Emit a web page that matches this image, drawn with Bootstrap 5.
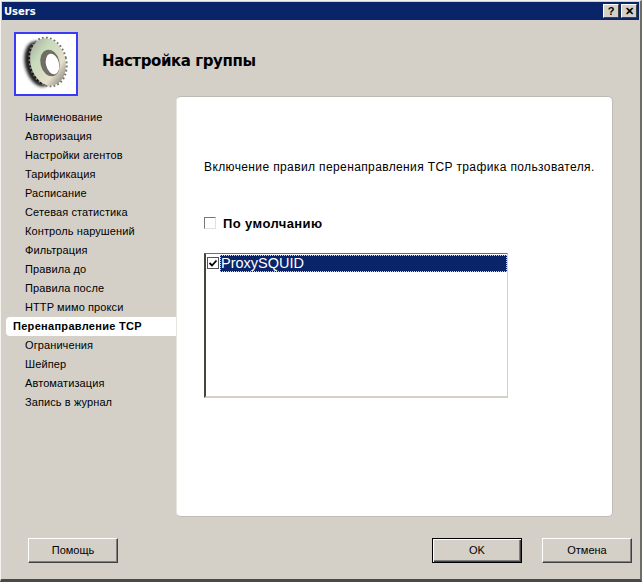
<!DOCTYPE html>
<html lang="ru">
<head>
<meta charset="utf-8">
<title>Users</title>
<link rel="stylesheet" href="https://cdn.jsdelivr.net/npm/bootstrap@5.3.0/dist/css/bootstrap.min.css">
<style>
html,body{margin:0;background:#d4d0c8;}
body{font-family:"Liberation Sans",Arial,sans-serif;font-size:11px;line-height:13px;color:#000;}
.win{width:642px;height:582px;background:#d4d0c8;padding:2px 2px 0 2px;border-left:1px solid #f4f3ef;border-right:2px solid #6e6c67;border-top:1px solid #f4f3ef;border-bottom:3px solid #4a4946;overflow:hidden;}
.tbar{height:18px;background:#0a246a;color:#fff;font-weight:700;padding:0 2px 0 2px;margin:-1px -1px 0 -1px;font-family:"DejaVu Sans",sans-serif;font-size:10px;flex:none;}
.tbtn{width:16px;height:14px;background:#d4d0c8;color:#000;border:1px solid;border-color:#fff #404040 #404040 #fff;font:700 11px/12px "Liberation Sans",sans-serif;text-align:center;padding:0;}
.tbtn+.tbtn{margin-left:2px;}
.hdr{padding:12px 0 0 11px;height:76px;flex:none;}
.logo{width:64px;height:64px;border:2px solid #3b3bf7;background:#fff;flex:none;}
.ttl{font:700 15px/20px "DejaVu Sans",sans-serif;letter-spacing:-.4px;margin:19px 0 0 24px;}
.body-row{height:421px;flex:none;}
.side{width:173px;flex:none;padding-top:12px;}
.side-item{height:19px;line-height:18px;padding-left:22px;letter-spacing:.1px;}
.side-item.on{background:#fff;font-weight:700;padding-left:7px;margin-left:3px;border-radius:4px 0 0 4px;letter-spacing:.3px;}
.pane{width:437px;height:421px;background:#fff;border:1px solid #bdbbb5;border-left-color:#e6e4df;border-radius:5px;padding:63px 0 0 27px;flex:none;}
.desc{font-size:12px;line-height:15px;letter-spacing:.38px;margin:0;white-space:nowrap;}
.chk-row{margin-top:41px;height:14px;}
.box{width:12px;height:12px;border:1px solid;border-color:#7a7873 #e3e1dc #e3e1dc #7a7873;background:#fff;flex:none;}
.chk-lbl{font-weight:700;font-size:13px;margin-left:7px;letter-spacing:.4px;}
.lst{width:304px;height:145px;margin-top:23px;background:#fff;border:2px solid;border-color:#6f6e6a #d4d0c8 #d4d0c8 #45443f;border-top-width:1px;border-right-width:1px;}
.lst-row{height:17px;margin-top:1px;}
.lst-box{width:12px;height:12px;border:1px solid #555;background:#fff;margin:2px 1px 0 1px;flex:none;display:flex;}
.lst-txt{flex:1;background:#0a246a;color:#fff;font-size:14.5px;line-height:16px;outline:1px dotted #e8d77a;outline-offset:-1px;padding-left:1px;}
.foot{padding:21px 6px 0 25px;flex:none;}
.wbtn{width:90px;height:25px;background:#d4d0c8;border:1px solid;border-color:#fff #404040 #404040 #fff;box-shadow:inset -1px -1px 0 #808080;font-size:11px;color:#000;padding:0;}
.wbtn.def{border:1px solid #000;box-shadow:inset 1px 1px 0 #fff,inset -1px -1px 0 #404040,inset -2px -2px 0 #808080;}
.gap20{margin-left:20px;}
</style>
</head>
<body>
<div class="win d-flex flex-column">
  <div class="tbar d-flex align-items-center justify-content-between">
    <span>Users</span>
    <span class="d-flex"><button class="tbtn">?</button><button class="tbtn">✕</button></span>
  </div>
  <div class="hdr d-flex align-items-start">
    <div class="logo">
      <svg width="60" height="60" viewBox="0 0 60 60" class="d-block">
        <defs>
          <linearGradient id="face" x1="0.2" y1="0" x2="0.8" y2="1">
            <stop offset="0" stop-color="#a9aca4"/><stop offset=".28" stop-color="#c5dab8"/>
            <stop offset=".72" stop-color="#e6dfcc"/><stop offset="1" stop-color="#85837b"/>
          </linearGradient>
          <filter id="soft" x="-30%" y="-30%" width="160%" height="160%"><feGaussianBlur stdDeviation=".5"/></filter>
          <filter id="blur2" x="-30%" y="-30%" width="160%" height="160%"><feGaussianBlur stdDeviation="1.5"/></filter>
        </defs>
        <ellipse cx="23" cy="30" rx="14" ry="23" transform="rotate(-14 23 30)" fill="#1f1f1f" filter="url(#blur2)"/>
        <g filter="url(#soft)">
          <ellipse cx="32" cy="28" rx="18" ry="24.5" transform="rotate(-14 32 28)" fill="none" stroke="#77756e" stroke-width="2.4" stroke-dasharray="1.8 2.2"/>
          <ellipse cx="32" cy="28" rx="17.5" ry="24" transform="rotate(-14 32 28)" fill="url(#face)"/>
          <ellipse cx="34" cy="29" rx="9.5" ry="13.5" transform="rotate(-14 34 29)" fill="#6f6d66"/>
          <ellipse cx="36.5" cy="30" rx="6.5" ry="10.5" transform="rotate(-14 36.5 30)" fill="#fff"/>
        </g>
      </svg>
    </div>
    <h1 class="ttl">Настройка группы</h1>
  </div>
  <div class="body-row d-flex">
    <nav class="side">
      <div class="side-item">Наименование</div>
      <div class="side-item">Авторизация</div>
      <div class="side-item">Настройки агентов</div>
      <div class="side-item">Тарификация</div>
      <div class="side-item">Расписание</div>
      <div class="side-item">Сетевая статистика</div>
      <div class="side-item">Контроль нарушений</div>
      <div class="side-item">Фильтрация</div>
      <div class="side-item">Правила до</div>
      <div class="side-item">Правила после</div>
      <div class="side-item">HTTP мимо прокси</div>
      <div class="side-item on">Перенаправление TCP</div>
      <div class="side-item">Ограничения</div>
      <div class="side-item">Шейпер</div>
      <div class="side-item">Автоматизация</div>
      <div class="side-item">Запись в журнал</div>
    </nav>
    <main class="pane">
      <p class="desc">Включение правил перенаправления TCP трафика пользователя.</p>
      <div class="chk-row d-flex align-items-center">
        <span class="box"></span><span class="chk-lbl">По умолчанию</span>
      </div>
      <div class="lst">
        <div class="lst-row d-flex">
          <span class="lst-box"><svg width="10" height="10" viewBox="0 0 10 10"><path d="M1.5 5l2.5 2.5 4.5-5" fill="none" stroke="#000" stroke-width="1.8"/></svg></span>
          <span class="lst-txt">ProxySQUID</span>
        </div>
      </div>
    </main>
  </div>
  <div class="foot d-flex">
    <button class="wbtn">Помощь</button>
    <button class="wbtn def ms-auto">OK</button>
    <button class="wbtn gap20">Отмена</button>
  </div>
</div>
</body>
</html>
